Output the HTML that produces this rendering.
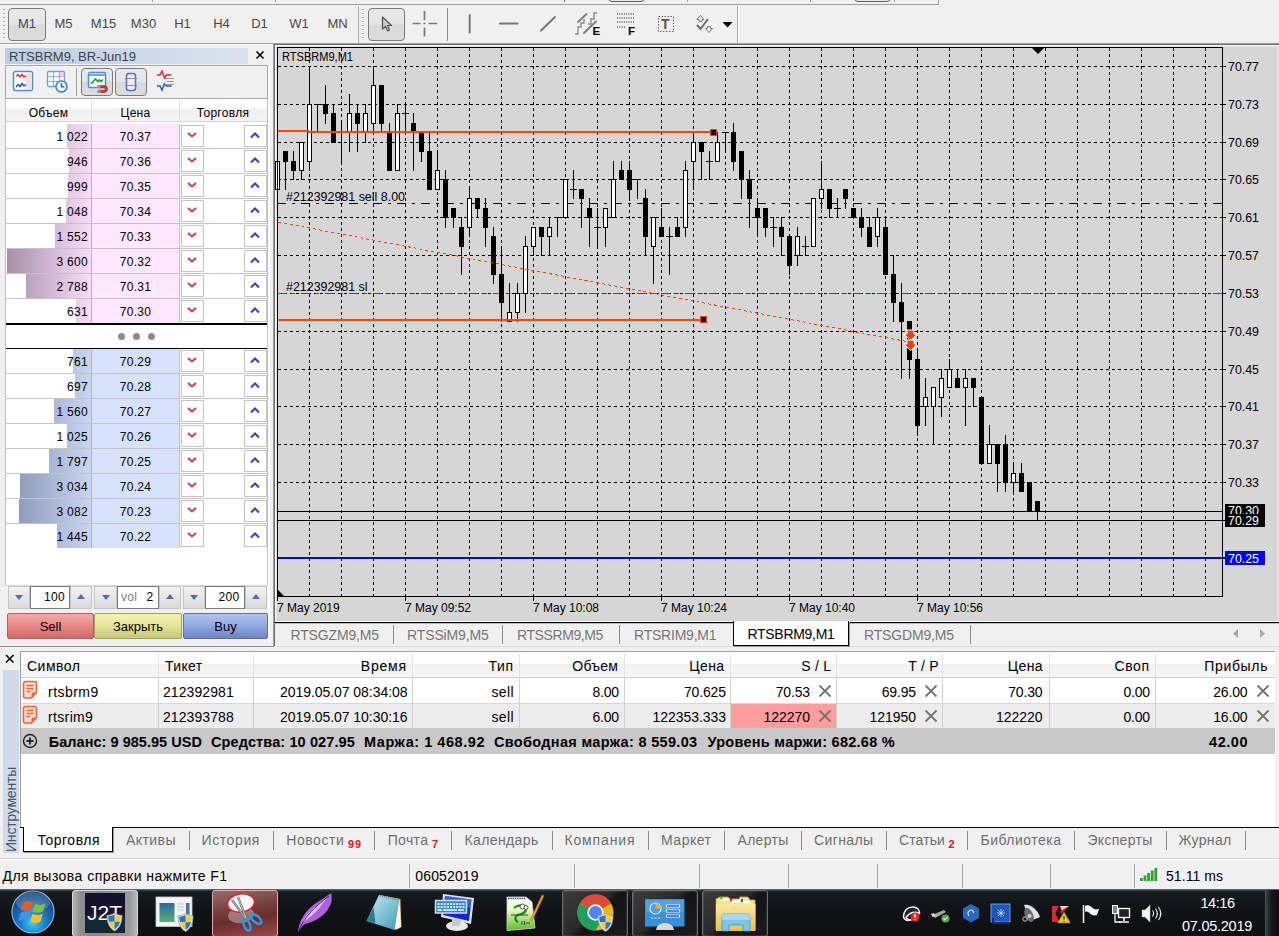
<!DOCTYPE html>
<html lang="ru"><head><meta charset="utf-8"><title>MetaTrader 5</title>
<style>
*{box-sizing:border-box;margin:0;padding:0}
html,body{width:1279px;height:936px;overflow:hidden;background:#f0f0f0}
body{position:relative;font-family:"Liberation Sans",sans-serif;font-size:13px;color:#000}
.abs{position:absolute}
.t{position:absolute;white-space:pre;line-height:1}
.ct{font-family:"Liberation Sans",sans-serif;font-size:12px}
svg text{font-family:"Liberation Sans",sans-serif}

.tf{font-size:13px;color:#484848}
.pbtn{border:1px solid #7a7a7a;border-radius:4px;background:linear-gradient(#e9e9e9 0,#e4e4e4 48%,#d9d9d9 52%,#dcdcdc 100%)}


.lf{font-size:12px;letter-spacing:.3px}
.sp{border:1px solid #c6c6c6;background:linear-gradient(#f3f3f3,#e6e6e6 50%,#dadada)}
.inp{border:1px solid #7c7c7c;background:#fff}
.tb{border:1px solid #888;border-radius:2px;font-size:13px;text-align:center;line-height:25px}


.sf{font-size:14px}
.gt{color:#6e6e6e}


.tbtn{border:1px solid #6c6c6c;border-radius:3px;background:linear-gradient(135deg,#3c3c3c 0,#2a2a2a 45%,#141414 55%,#1c1c1c 100%);box-shadow:inset 0 0 0 1px rgba(255,255,255,.08)}
</style></head>
<body>
<div class="abs " style="left:0px;top:4px;width:939px;height:1px;background:#a0a0a0"></div>
<div class="abs " style="left:0px;top:43px;width:1279px;height:1px;background:#a0a0a0"></div>
<div class="abs " style="left:0px;top:44px;width:273px;height:1px;background:#fff"></div>
<div class="abs " style="left:273px;top:43px;width:1006px;height:579px;background:#d6d6d6"></div>
<div class="abs " style="left:273px;top:43px;width:1006px;height:1px;background:#a0a0a0"></div>
<div class="abs " style="left:273px;top:43px;width:1px;height:604px;background:#a0a0a0"></div>
<div class="abs " style="left:274px;top:44px;width:1005px;height:1px;background:#6c6c6c"></div>
<div class="abs " style="left:274px;top:44px;width:1px;height:603px;background:#6c6c6c"></div>
<div class="abs " style="left:275px;top:45px;width:1004px;height:1px;background:#f8f8f8"></div>
<div class="abs " style="left:275px;top:45px;width:1px;height:577px;background:#f8f8f8"></div>
<div class="abs " style="left:276px;top:46px;width:1003px;height:1px;background:#e4e4e4"></div>
<div class="abs " style="left:276px;top:46px;width:1px;height:575px;background:#e4e4e4"></div>
<div class="abs " style="left:275px;top:621px;width:1004px;height:1px;background:#f8f8f8"></div>
<div class="abs " style="left:1277px;top:45px;width:2px;height:577px;background:#e2e2e2"></div>
<div class="abs " style="left:0px;top:646px;width:274px;height:1px;background:#909090"></div>
<svg class="abs" style="left:0;top:0" width="1279" height="640" viewBox="0 0 1279 640" shape-rendering="crispEdges">
<path d="M309.5 48V596M341.5 48V596M373.5 48V596M405.5 48V596M437.5 48V596M469.5 48V596M501.5 48V596M533.5 48V596M565.5 48V596M597.5 48V596M629.5 48V596M661.5 48V596M693.5 48V596M725.5 48V596M757.5 48V596M789.5 48V596M821.5 48V596M853.5 48V596M885.5 48V596M917.5 48V596M949.5 48V596M981.5 48V596M1013.5 48V596M1045.5 48V596M1077.5 48V596M1109.5 48V596M1141.5 48V596M1173.5 48V596M1205.5 48V596M278 66.5H1222M278 104.5H1222M278 142.5H1222M278 179.5H1222M278 217.5H1222M278 255.5H1222M278 293.5H1222M278 331.5H1222M278 369.5H1222M278 406.5H1222M278 444.5H1222M278 482.5H1222M278 520.5H1222M278 558.5H1222" stroke="#000" stroke-width="1" stroke-dasharray="3 3" fill="none"/>
<path d="M277 203.5H1222" stroke="#000" stroke-dasharray="9 6 3 6" fill="none"/>
<path d="M277 293.5H1222" stroke="#f00" stroke-dasharray="9 6 3 6" fill="none"/>
<path d="M277.5 161V190M285.5 151V190M293.5 151V180M301.5 142V180M309.5 66V171M317.5 104V133M314 104.5H321M325.5 85V124M333.5 104V143M341.5 123V162M338 132.5H345M349.5 94V152M357.5 104V152M365.5 104V143M373.5 66V133M381.5 85V133M389.5 123V171M397.5 104V171M405.5 104V133M402 113.5H409M413.5 113V171M421.5 132V162M429.5 132V190M437.5 151V190M445.5 170V228M453.5 208V228M461.5 217V275M469.5 189V237M477.5 198V218M485.5 198V247M493.5 227V284M501.5 246V322M509.5 283V322M517.5 283V322M525.5 236V313M533.5 227V256M541.5 227V256M549.5 217V256M557.5 217V237M554 217.5H561M565.5 179V218M573.5 170V199M570 189.5H577M581.5 189V228M589.5 198V247M597.5 208V247M594 227.5H601M605.5 208V247M613.5 161V218M621.5 161V180M629.5 161V199M637.5 179V199M634 179.5H641M645.5 189V256M653.5 217V284M661.5 208V237M669.5 227V275M666 236.5H673M677.5 217V237M685.5 161V237M693.5 132V190M701.5 142V180M709.5 151V180M706 161.5H713M717.5 132V162M725.5 132V152M722 132.5H729M733.5 123V171M741.5 151V199M749.5 170V228M757.5 198V237M765.5 208V237M773.5 217V247M770 227.5H777M781.5 217V256M789.5 236V275M797.5 227V266M805.5 236V256M802 246.5H809M813.5 198V247M821.5 161V209M829.5 189V218M837.5 198V218M834 208.5H841M845.5 189V209M853.5 208V218M861.5 208V237M869.5 217V247M877.5 208V247M885.5 217V275M893.5 255V322M901.5 283V379M909.5 321V379M917.5 350V436M925.5 378V426M933.5 387V445M941.5 369V417M949.5 359V388M957.5 369V388M965.5 369V426M973.5 378V407M981.5 397V464M989.5 425V464M997.5 444V492M1005.5 435V492M1013.5 463V492M1021.5 463V492M1029.5 482V511M1037.5 501V521" stroke="#000" stroke-width="1" fill="none"/>
<path d="M283 151H288V162H283ZM291 161H296V171H291ZM323 104H328V114H323ZM331 113H336V143H331ZM355 113H360V124H355ZM379 85H384V124H379ZM387 132H392V171H387ZM411 123H416V133H411ZM419 132H424V152H419ZM427 151H432V190H427ZM443 179H448V218H443ZM451 208H456V218H451ZM459 227H464V247H459ZM475 198H480V209H475ZM483 208H488V228H483ZM491 236H496V275H491ZM499 274H504V303H499ZM539 227H544V237H539ZM579 189H584V199H579ZM587 208H592V218H587ZM619 170H624V180H619ZM627 170H632V190H627ZM643 198H648V237H643ZM659 227H664V237H659ZM675 227H680V237H675ZM699 142H704V152H699ZM731 132H736V162H731ZM739 151H744V180H739ZM747 179H752V199H747ZM755 208H760V218H755ZM763 208H768V228H763ZM779 227H784V237H779ZM787 236H792V266H787ZM827 189H832V209H827ZM843 189H848V199H843ZM851 208H856V218H851ZM859 217H864V228H859ZM867 227H872V247H867ZM883 227H888V275H883ZM891 274H896V303H891ZM899 302H904V322H899ZM907 321H912V360H907ZM915 359H920V426H915ZM955 378H960V388H955ZM971 378H976V388H971ZM979 397H984V464H979ZM995 444H1000V464H995ZM1003 444H1008V483H1003ZM1019 473H1024V492H1019ZM1027 482H1032V511H1027ZM1035 501H1040V511H1035Z" fill="#000"/>
<rect x="275.5" y="161.5" width="4" height="28" fill="#fff" stroke="#000"/>
<rect x="299.5" y="142.5" width="4" height="28" fill="#fff" stroke="#000"/>
<rect x="307.5" y="104.5" width="4" height="57" fill="#fff" stroke="#000"/>
<rect x="347.5" y="113.5" width="4" height="19" fill="#fff" stroke="#000"/>
<rect x="363.5" y="113.5" width="4" height="19" fill="#fff" stroke="#000"/>
<rect x="371.5" y="85.5" width="4" height="38" fill="#fff" stroke="#000"/>
<rect x="395.5" y="113.5" width="4" height="57" fill="#fff" stroke="#000"/>
<rect x="435.5" y="170.5" width="4" height="19" fill="#fff" stroke="#000"/>
<rect x="467.5" y="198.5" width="4" height="29" fill="#fff" stroke="#000"/>
<rect x="507.5" y="312.5" width="4" height="9" fill="#fff" stroke="#000"/>
<rect x="515.5" y="293.5" width="4" height="19" fill="#fff" stroke="#000"/>
<rect x="523.5" y="246.5" width="4" height="47" fill="#fff" stroke="#000"/>
<rect x="531.5" y="227.5" width="4" height="19" fill="#fff" stroke="#000"/>
<rect x="547.5" y="227.5" width="4" height="9" fill="#fff" stroke="#000"/>
<rect x="563.5" y="179.5" width="4" height="38" fill="#fff" stroke="#000"/>
<rect x="603.5" y="208.5" width="4" height="19" fill="#fff" stroke="#000"/>
<rect x="611.5" y="179.5" width="4" height="38" fill="#fff" stroke="#000"/>
<rect x="651.5" y="217.5" width="4" height="29" fill="#fff" stroke="#000"/>
<rect x="683.5" y="170.5" width="4" height="57" fill="#fff" stroke="#000"/>
<rect x="691.5" y="142.5" width="4" height="19" fill="#fff" stroke="#000"/>
<rect x="715.5" y="142.5" width="4" height="19" fill="#fff" stroke="#000"/>
<rect x="795.5" y="236.5" width="4" height="19" fill="#fff" stroke="#000"/>
<rect x="811.5" y="198.5" width="4" height="48" fill="#fff" stroke="#000"/>
<rect x="819.5" y="189.5" width="4" height="9" fill="#fff" stroke="#000"/>
<rect x="875.5" y="217.5" width="4" height="19" fill="#fff" stroke="#000"/>
<rect x="923.5" y="397.5" width="4" height="9" fill="#fff" stroke="#000"/>
<rect x="931.5" y="387.5" width="4" height="19" fill="#fff" stroke="#000"/>
<rect x="939.5" y="378.5" width="4" height="19" fill="#fff" stroke="#000"/>
<rect x="947.5" y="369.5" width="4" height="18" fill="#fff" stroke="#000"/>
<rect x="963.5" y="378.5" width="4" height="9" fill="#fff" stroke="#000"/>
<rect x="987.5" y="444.5" width="4" height="19" fill="#fff" stroke="#000"/>
<rect x="1011.5" y="473.5" width="4" height="9" fill="#fff" stroke="#000"/>
<path d="M278 511.5H1222M278 520.5H1227" stroke="#000" fill="none"/>
<path d="M278 558H1227" stroke="#0000ff" stroke-width="2" fill="none"/>
<path d="M278 131H309M308 132H713" stroke="#ff4500" stroke-width="2" fill="none"/>
<path d="M278 320H704" stroke="#ff4500" stroke-width="2" fill="none"/>
<rect x="710.5" y="129.5" width="6" height="6" fill="#000" stroke="#ff4500"/>
<rect x="700.5" y="316.5" width="6" height="6" fill="#000" stroke="#ff4500"/>
<path d="M278 222L909 342" stroke="#ff4500" stroke-dasharray="3 3" fill="none"/>
<path d="M907 330h7v4h3l-6.5 6.500l-6.500 -6.500h3z" fill="#e8401c" stroke="#fff" stroke-width="1" shape-rendering="auto"/>
<path d="M907 340h7v4h3l-6.5 6.500l-6.500 -6.500h3z" fill="#e8401c" stroke="#fff" stroke-width="1" shape-rendering="auto"/>
<path d="M277.5 47V596.500H1222.500V47.500H277" stroke="#000" fill="none"/>
<path d="M1222 66.5H1226M1222 104.5H1226M1222 142.5H1226M1222 179.5H1226M1222 217.5H1226M1222 255.5H1226M1222 293.5H1226M1222 331.5H1226M1222 369.5H1226M1222 406.5H1226M1222 444.5H1226M1222 482.5H1226M1222 520.5H1226M1222 558.5H1226M277.5 596V601M405.5 596V601M533.5 596V601M661.5 596V601M789.5 596V601M917.5 596V601" stroke="#000" fill="none"/>
<path d="M1031 47h14l-7 7z" fill="#000" shape-rendering="auto"/>
<path d="M278 590v6h6z" fill="#000" shape-rendering="auto"/>
<text x="1228" y="70.5" class="ct" textLength="31" lengthAdjust="spacingAndGlyphs">70.77</text>
<text x="1228" y="108.5" class="ct" textLength="31" lengthAdjust="spacingAndGlyphs">70.73</text>
<text x="1228" y="146.5" class="ct" textLength="31" lengthAdjust="spacingAndGlyphs">70.69</text>
<text x="1228" y="183.5" class="ct" textLength="31" lengthAdjust="spacingAndGlyphs">70.65</text>
<text x="1228" y="221.5" class="ct" textLength="31" lengthAdjust="spacingAndGlyphs">70.61</text>
<text x="1228" y="259.5" class="ct" textLength="31" lengthAdjust="spacingAndGlyphs">70.57</text>
<text x="1228" y="297.5" class="ct" textLength="31" lengthAdjust="spacingAndGlyphs">70.53</text>
<text x="1228" y="335.5" class="ct" textLength="31" lengthAdjust="spacingAndGlyphs">70.49</text>
<text x="1228" y="373.5" class="ct" textLength="31" lengthAdjust="spacingAndGlyphs">70.45</text>
<text x="1228" y="410.5" class="ct" textLength="31" lengthAdjust="spacingAndGlyphs">70.41</text>
<text x="1228" y="448.5" class="ct" textLength="31" lengthAdjust="spacingAndGlyphs">70.37</text>
<text x="1228" y="486.5" class="ct" textLength="31" lengthAdjust="spacingAndGlyphs">70.33</text>
<rect x="1225" y="504" width="40" height="12" fill="#000"/><text x="1228" y="515" class="ct" fill="#fff" textLength="31" lengthAdjust="spacingAndGlyphs">70.30</text>
<rect x="1225" y="514" width="40" height="13" fill="#000"/><text x="1228" y="525" class="ct" fill="#fff" textLength="31" lengthAdjust="spacingAndGlyphs">70.29</text>
<rect x="1225" y="551" width="40" height="14" fill="#0000ff"/><text x="1228" y="562.5" class="ct" fill="#fff" textLength="31" lengthAdjust="spacingAndGlyphs">70.25</text>
<text x="277" y="612" class="ct">7 May 2019</text>
<text x="405" y="612" class="ct">7 May 09:52</text>
<text x="533" y="612" class="ct">7 May 10:08</text>
<text x="661" y="612" class="ct">7 May 10:24</text>
<text x="789" y="612" class="ct">7 May 10:40</text>
<text x="917" y="612" class="ct">7 May 10:56</text>
<text x="282" y="61" class="ct" textLength="71" lengthAdjust="spacingAndGlyphs">RTSBRM9,M1</text>
<text x="286" y="201" class="ct" textLength="119" lengthAdjust="spacingAndGlyphs">#212392981 sell 8.00</text>
<text x="286" y="291" class="ct" textLength="81.5" lengthAdjust="spacingAndGlyphs">#212392981 sl</text>
</svg>
<div class="abs " style="left:152px;top:0px;width:1px;height:2px;background:#a0a0a0"></div>
<div class="abs " style="left:275px;top:0px;width:1px;height:2px;background:#a0a0a0"></div>
<div class="abs " style="left:564px;top:0px;width:1px;height:2px;background:#707070"></div>
<div class="abs " style="left:687px;top:0px;width:1px;height:2px;background:#a0a0a0"></div>
<div class="abs " style="left:810px;top:0px;width:1px;height:2px;background:#a0a0a0"></div>
<div class="abs " style="left:894px;top:0px;width:1px;height:2px;background:#a0a0a0"></div>
<div class="abs " style="left:938px;top:0px;width:1px;height:5px;background:#a0a0a0"></div>
<div class="abs " style="left:608px;top:-6px;width:37px;height:8px;border:1px solid #606060;border-radius:4px;background:#e6e6e6"></div>
<div class="abs " style="left:854px;top:-6px;width:37px;height:8px;border:1px solid #606060;border-radius:4px;background:#e6e6e6"></div>
<div class="abs " style="left:3px;top:8px;width:2px;height:33px;background-image:repeating-linear-gradient(#f0f0f0 0 1px,#b0b0b0 1px 2px,#fff 2px 3px,#f0f0f0 3px 4px)"></div>
<div class="abs " style="left:358px;top:6px;width:1px;height:37px;background:#b0b0b0"></div>
<div class="abs " style="left:362px;top:8px;width:2px;height:33px;background-image:repeating-linear-gradient(#f0f0f0 0 1px,#b0b0b0 1px 2px,#fff 2px 3px,#f0f0f0 3px 4px)"></div>
<div class="abs " style="left:737px;top:6px;width:1px;height:37px;background:#a8a8a8"></div>
<div class="abs " style="left:738px;top:6px;width:1px;height:37px;background:#fff"></div>
<div class="abs pbtn" style="left:8px;top:8px;width:38px;height:33px;"></div>
<div class="t tf" style="left:-73px;width:200px;text-align:center;top:17px;">M1</div>
<div class="t tf" style="left:-36.5px;width:200px;text-align:center;top:17px;">M5</div>
<div class="t tf" style="left:3.5px;width:200px;text-align:center;top:17px;">M15</div>
<div class="t tf" style="left:43.5px;width:200px;text-align:center;top:17px;">M30</div>
<div class="t tf" style="left:82.5px;width:200px;text-align:center;top:17px;">H1</div>
<div class="t tf" style="left:121.5px;width:200px;text-align:center;top:17px;">H4</div>
<div class="t tf" style="left:159.5px;width:200px;text-align:center;top:17px;">D1</div>
<div class="t tf" style="left:199px;width:200px;text-align:center;top:17px;">W1</div>
<div class="t tf" style="left:237.5px;width:200px;text-align:center;top:17px;">MN</div>
<div class="abs pbtn" style="left:368px;top:8px;width:37px;height:33px;"></div>
<svg class="abs" style="left:360px;top:5px" width="390" height="38" viewBox="360 5 390 38"><path d="M382.500 17v12l3 -2.500l2 4.500l2 -1l-2 -4.500h4z" fill="#c8c8c8" stroke="#555" stroke-width="1.200" stroke-linejoin="round"/><path d="M412.500 23.500h8m8 0h8.500M424.500 11v9m0 7.500v9M423.500 23.500h2" stroke="#7a7a7a" stroke-width="1.700" fill="none"/><path d="M447.500 8v33" stroke="#8c8c8c" stroke-width="1"/><path d="M469.700 15v17.500M500 23.500h17.500M541 30.500l14 -13.500" stroke="#787878" stroke-width="2" stroke-linecap="round" fill="none"/><path d="M578 22l8.500 -8M584 33l12 -11.500" stroke="#808080" stroke-width="2" stroke-linecap="round" fill="none"/><path d="M575 34h3v-7h3v-4h3v-4M588 24h3v-5h3v-6h3" stroke="#8a8a8a" stroke-width="1.400" fill="none"/><text x="592.500" y="34.500" font-size="11.500" font-weight="bold" fill="#000">E</text><path d="M617 14h17" stroke="#808080" stroke-width="2" stroke-dasharray="1 1.300"/><path d="M617 18h17" stroke="#808080" stroke-width="2" stroke-dasharray="1 1.300"/><path d="M617 22h17" stroke="#808080" stroke-width="2" stroke-dasharray="1 1.300"/><path d="M617 27h9" stroke="#808080" stroke-width="2" stroke-dasharray="1 1.300"/><text x="628" y="34.500" font-size="11.500" font-weight="bold" fill="#000">F</text><rect x="658.500" y="16.500" width="15" height="15" fill="none" stroke="#666" stroke-dasharray="1.500 1.500"/><text x="661" y="29" font-size="14" font-family="Liberation Serif,serif" font-weight="bold" fill="#555">T</text><path d="M697 25l3.500 4l7.500 -10" stroke="#6a6a6a" stroke-width="2" fill="none"/><path d="M700.500 15.500l3.500 4h-2v2h-3v-2h-2zM709 32.500l-3.500 -4h2v-2h3v2h2z" fill="#f4f4f4" stroke="#7a7a7a" stroke-width="1"/><path d="M722.500 22h10l-5 5.500z" fill="#000"/></svg>
<div class="abs " style="left:5px;top:48px;width:243px;height:16px;background:linear-gradient(90deg,#bccde2,#d9e3ef)"></div>
<div class="t " style="left:9px;top:49px;font-size:13px;color:#3a4350;line-height:15px">RTSBRM9, BR-Jun19</div>
<svg class="abs" style="left:255px;top:50px" width="11" height="11"><path d="M1.500 1.500l7 7m0 -7l-7 7" stroke="#000" stroke-width="1.600"/></svg>
<div class="abs " style="left:5px;top:65px;width:263px;height:34px;border:1px solid #a8a8a8;background:#f0f0f0"></div>
<div class="abs " style="left:76px;top:68px;width:1px;height:28px;background:#a0a0a0"></div>
<div class="abs pbtn" style="left:81px;top:68px;width:32px;height:28px;"></div>
<div class="abs pbtn" style="left:115px;top:68px;width:32px;height:28px;"></div>
<svg class="abs" style="left:5px;top:65px" width="263" height="34" viewBox="5 65 263 34"><rect x="13.500" y="71.500" width="19" height="19" rx="2" fill="#fff" stroke="#4a90e0" stroke-width="1.500"/><rect x="26" y="72.500" width="6" height="17" fill="#f6dcf4"/><path d="M16 76l2 -1.500l2 2.500l2 -2.500l2 2.500l2 -1" stroke="#e03030" stroke-width="1.500" fill="none"/><path d="M16 87l2 -2.500l2 2l2 -3l2 2.500l2 -1.500" stroke="#2050d0" stroke-width="1.500" fill="none"/><rect x="47.500" y="71.500" width="17" height="15" rx="1.500" fill="#fff" stroke="#6aa0e0" stroke-width="1.300"/><path d="M48 76.500h16M48 81.500h16M53.500 72v14M59.500 72v14" stroke="#8ab4e8" stroke-width="1.200"/><rect x="60" y="72.500" width="4" height="4" fill="#f4c8f0"/><circle cx="61.500" cy="86.500" r="5.500" fill="#fff" stroke="#3a80e0" stroke-width="1.600"/><path d="M61.500 83v3.700h3" stroke="#2060d0" stroke-width="1.500" fill="none"/><rect x="88.500" y="72.500" width="17" height="15" rx="1.500" fill="#fff" stroke="#4a90e0" stroke-width="1.500"/><path d="M89 75h16" stroke="#6aa8f0" stroke-width="2"/><path d="M91 84l4.500 -5l2.500 2.500l1.500 -1.500l1.500 1.500l2 -2" stroke="#20a020" stroke-width="1.600" fill="none"/><path d="M98 85.500h6a3.500 3.500 0 0 1 0 7h-6v-2.200h6a1.300 1.300 0 0 0 0 -2.600h-6z" fill="#e03030" stroke="#a02020" stroke-width=".6"/><rect x="97.500" y="85.300" width="3" height="2.600" fill="#999"/><rect x="97.500" y="90.200" width="3" height="2.600" fill="#999"/><rect x="126.500" y="73.500" width="9" height="17" rx="2.500" fill="#fce8fa" stroke="#3a80e0" stroke-width="1.600"/><path d="M125 78.500h12M125 85.500h12" stroke="#8a8a8a" stroke-width="1"/><path d="M157 75h3l2 -4l2.500 7l2 -3h5" stroke="#e03030" stroke-width="1.600" fill="none"/><path d="M157 86h3l2 4l2.500 -6l2 2h5" stroke="#2060c0" stroke-width="1.600" fill="none"/><path d="M165 78.500h9M167 81.500h7M165 84.500h9" stroke="#999" stroke-width="1"/></svg>
<div class="abs " style="left:5px;top:99px;width:263px;height:486px;background:#fff;border-left:1px solid #c0c0c0;border-right:1px solid #c0c0c0"></div>
<div class="abs " style="left:6px;top:99px;width:261px;height:23px;background:linear-gradient(#fff 0,#fff 40%,#f1f1f1 45%,#f4f4f4 100%);border-bottom:1px solid #d4d4d4"></div>
<div class="abs " style="left:91px;top:100px;width:1px;height:22px;background:#e2e2e2"></div>
<div class="abs " style="left:179px;top:100px;width:1px;height:22px;background:#e2e2e2"></div>
<div class="t lf" style="left:-51.5px;width:200px;text-align:center;top:107px;">Объем</div>
<div class="t lf" style="left:35.5px;width:200px;text-align:center;top:107px;">Цена</div>
<div class="t lf" style="left:123px;width:200px;text-align:center;top:107px;">Торговля</div>
<div class="abs " style="left:92px;top:124px;width:87px;height:24px;background:#fee6fe"></div>
<div class="abs " style="left:67px;top:124px;width:24px;height:24px;background:linear-gradient(90deg,#a48ea6,#fadcfa);background-size:86px 24px;background-position:right top"></div>
<div class="abs " style="left:6px;top:148px;width:261px;height:1px;background:#c4c4c4"></div>
<div class="abs " style="left:91px;top:124px;width:1px;height:24px;background:#b4b4b4"></div>
<div class="abs " style="left:179px;top:124px;width:1px;height:24px;background:#c4c4c4"></div>
<div class="t lf" style="right:1191px;top:131px;">1 022</div>
<div class="t lf" style="left:35.5px;width:200px;text-align:center;top:131px;">70.37</div>
<div class="abs " style="left:181px;top:125px;width:23px;height:22px;border:1px solid #c4c4c4;background:#fff"></div>
<div class="abs " style="left:244px;top:125px;width:23px;height:22px;border:1px solid #c4c4c4;background:#fff"></div>
<svg class="abs" style="left:186px;top:131px" width="12" height="9"><path d="M2 2l4 3.500l4 -3.500" stroke="#d03c46" stroke-width="2" fill="none"/></svg>
<svg class="abs" style="left:249px;top:131px" width="12" height="9"><path d="M2 6.500l4 -4l4 4" stroke="#3c3cd0" stroke-width="2" fill="none"/></svg>
<div class="abs " style="left:92px;top:149px;width:87px;height:24px;background:#fee6fe"></div>
<div class="abs " style="left:69px;top:149px;width:22px;height:24px;background:linear-gradient(90deg,#a48ea6,#fadcfa);background-size:86px 24px;background-position:right top"></div>
<div class="abs " style="left:6px;top:173px;width:261px;height:1px;background:#c4c4c4"></div>
<div class="abs " style="left:91px;top:149px;width:1px;height:24px;background:#b4b4b4"></div>
<div class="abs " style="left:179px;top:149px;width:1px;height:24px;background:#c4c4c4"></div>
<div class="t lf" style="right:1191px;top:156px;">946</div>
<div class="t lf" style="left:35.5px;width:200px;text-align:center;top:156px;">70.36</div>
<div class="abs " style="left:181px;top:150px;width:23px;height:22px;border:1px solid #c4c4c4;background:#fff"></div>
<div class="abs " style="left:244px;top:150px;width:23px;height:22px;border:1px solid #c4c4c4;background:#fff"></div>
<svg class="abs" style="left:186px;top:156px" width="12" height="9"><path d="M2 2l4 3.500l4 -3.500" stroke="#d03c46" stroke-width="2" fill="none"/></svg>
<svg class="abs" style="left:249px;top:156px" width="12" height="9"><path d="M2 6.500l4 -4l4 4" stroke="#3c3cd0" stroke-width="2" fill="none"/></svg>
<div class="abs " style="left:92px;top:174px;width:87px;height:24px;background:#fee6fe"></div>
<div class="abs " style="left:68px;top:174px;width:23px;height:24px;background:linear-gradient(90deg,#a48ea6,#fadcfa);background-size:86px 24px;background-position:right top"></div>
<div class="abs " style="left:6px;top:198px;width:261px;height:1px;background:#c4c4c4"></div>
<div class="abs " style="left:91px;top:174px;width:1px;height:24px;background:#b4b4b4"></div>
<div class="abs " style="left:179px;top:174px;width:1px;height:24px;background:#c4c4c4"></div>
<div class="t lf" style="right:1191px;top:181px;">999</div>
<div class="t lf" style="left:35.5px;width:200px;text-align:center;top:181px;">70.35</div>
<div class="abs " style="left:181px;top:175px;width:23px;height:22px;border:1px solid #c4c4c4;background:#fff"></div>
<div class="abs " style="left:244px;top:175px;width:23px;height:22px;border:1px solid #c4c4c4;background:#fff"></div>
<svg class="abs" style="left:186px;top:181px" width="12" height="9"><path d="M2 2l4 3.500l4 -3.500" stroke="#d03c46" stroke-width="2" fill="none"/></svg>
<svg class="abs" style="left:249px;top:181px" width="12" height="9"><path d="M2 6.500l4 -4l4 4" stroke="#3c3cd0" stroke-width="2" fill="none"/></svg>
<div class="abs " style="left:92px;top:199px;width:87px;height:24px;background:#fee6fe"></div>
<div class="abs " style="left:66px;top:199px;width:25px;height:24px;background:linear-gradient(90deg,#a48ea6,#fadcfa);background-size:86px 24px;background-position:right top"></div>
<div class="abs " style="left:6px;top:223px;width:261px;height:1px;background:#c4c4c4"></div>
<div class="abs " style="left:91px;top:199px;width:1px;height:24px;background:#b4b4b4"></div>
<div class="abs " style="left:179px;top:199px;width:1px;height:24px;background:#c4c4c4"></div>
<div class="t lf" style="right:1191px;top:206px;">1 048</div>
<div class="t lf" style="left:35.5px;width:200px;text-align:center;top:206px;">70.34</div>
<div class="abs " style="left:181px;top:200px;width:23px;height:22px;border:1px solid #c4c4c4;background:#fff"></div>
<div class="abs " style="left:244px;top:200px;width:23px;height:22px;border:1px solid #c4c4c4;background:#fff"></div>
<svg class="abs" style="left:186px;top:206px" width="12" height="9"><path d="M2 2l4 3.500l4 -3.500" stroke="#d03c46" stroke-width="2" fill="none"/></svg>
<svg class="abs" style="left:249px;top:206px" width="12" height="9"><path d="M2 6.500l4 -4l4 4" stroke="#3c3cd0" stroke-width="2" fill="none"/></svg>
<div class="abs " style="left:92px;top:224px;width:87px;height:24px;background:#fee6fe"></div>
<div class="abs " style="left:55px;top:224px;width:36px;height:24px;background:linear-gradient(90deg,#a48ea6,#fadcfa);background-size:86px 24px;background-position:right top"></div>
<div class="abs " style="left:6px;top:248px;width:261px;height:1px;background:#c4c4c4"></div>
<div class="abs " style="left:91px;top:224px;width:1px;height:24px;background:#b4b4b4"></div>
<div class="abs " style="left:179px;top:224px;width:1px;height:24px;background:#c4c4c4"></div>
<div class="t lf" style="right:1191px;top:231px;">1 552</div>
<div class="t lf" style="left:35.5px;width:200px;text-align:center;top:231px;">70.33</div>
<div class="abs " style="left:181px;top:225px;width:23px;height:22px;border:1px solid #c4c4c4;background:#fff"></div>
<div class="abs " style="left:244px;top:225px;width:23px;height:22px;border:1px solid #c4c4c4;background:#fff"></div>
<svg class="abs" style="left:186px;top:231px" width="12" height="9"><path d="M2 2l4 3.500l4 -3.500" stroke="#d03c46" stroke-width="2" fill="none"/></svg>
<svg class="abs" style="left:249px;top:231px" width="12" height="9"><path d="M2 6.500l4 -4l4 4" stroke="#3c3cd0" stroke-width="2" fill="none"/></svg>
<div class="abs " style="left:92px;top:249px;width:87px;height:24px;background:#fee6fe"></div>
<div class="abs " style="left:7px;top:249px;width:84px;height:24px;background:linear-gradient(90deg,#a48ea6,#fadcfa);background-size:86px 24px;background-position:right top"></div>
<div class="abs " style="left:6px;top:273px;width:261px;height:1px;background:#c4c4c4"></div>
<div class="abs " style="left:91px;top:249px;width:1px;height:24px;background:#b4b4b4"></div>
<div class="abs " style="left:179px;top:249px;width:1px;height:24px;background:#c4c4c4"></div>
<div class="t lf" style="right:1191px;top:256px;">3 600</div>
<div class="t lf" style="left:35.5px;width:200px;text-align:center;top:256px;">70.32</div>
<div class="abs " style="left:181px;top:250px;width:23px;height:22px;border:1px solid #c4c4c4;background:#fff"></div>
<div class="abs " style="left:244px;top:250px;width:23px;height:22px;border:1px solid #c4c4c4;background:#fff"></div>
<svg class="abs" style="left:186px;top:256px" width="12" height="9"><path d="M2 2l4 3.500l4 -3.500" stroke="#d03c46" stroke-width="2" fill="none"/></svg>
<svg class="abs" style="left:249px;top:256px" width="12" height="9"><path d="M2 6.500l4 -4l4 4" stroke="#3c3cd0" stroke-width="2" fill="none"/></svg>
<div class="abs " style="left:92px;top:274px;width:87px;height:24px;background:#fee6fe"></div>
<div class="abs " style="left:26px;top:274px;width:65px;height:24px;background:linear-gradient(90deg,#a48ea6,#fadcfa);background-size:86px 24px;background-position:right top"></div>
<div class="abs " style="left:6px;top:298px;width:261px;height:1px;background:#c4c4c4"></div>
<div class="abs " style="left:91px;top:274px;width:1px;height:24px;background:#b4b4b4"></div>
<div class="abs " style="left:179px;top:274px;width:1px;height:24px;background:#c4c4c4"></div>
<div class="t lf" style="right:1191px;top:281px;">2 788</div>
<div class="t lf" style="left:35.5px;width:200px;text-align:center;top:281px;">70.31</div>
<div class="abs " style="left:181px;top:275px;width:23px;height:22px;border:1px solid #c4c4c4;background:#fff"></div>
<div class="abs " style="left:244px;top:275px;width:23px;height:22px;border:1px solid #c4c4c4;background:#fff"></div>
<svg class="abs" style="left:186px;top:281px" width="12" height="9"><path d="M2 2l4 3.500l4 -3.500" stroke="#d03c46" stroke-width="2" fill="none"/></svg>
<svg class="abs" style="left:249px;top:281px" width="12" height="9"><path d="M2 6.500l4 -4l4 4" stroke="#3c3cd0" stroke-width="2" fill="none"/></svg>
<div class="abs " style="left:92px;top:299px;width:87px;height:24px;background:#fee6fe"></div>
<div class="abs " style="left:76px;top:299px;width:15px;height:24px;background:linear-gradient(90deg,#a48ea6,#fadcfa);background-size:86px 24px;background-position:right top"></div>
<div class="abs " style="left:91px;top:299px;width:1px;height:24px;background:#b4b4b4"></div>
<div class="abs " style="left:179px;top:299px;width:1px;height:24px;background:#c4c4c4"></div>
<div class="t lf" style="right:1191px;top:306px;">631</div>
<div class="t lf" style="left:35.5px;width:200px;text-align:center;top:306px;">70.30</div>
<div class="abs " style="left:181px;top:300px;width:23px;height:22px;border:1px solid #c4c4c4;background:#fff"></div>
<div class="abs " style="left:244px;top:300px;width:23px;height:22px;border:1px solid #c4c4c4;background:#fff"></div>
<svg class="abs" style="left:186px;top:306px" width="12" height="9"><path d="M2 2l4 3.500l4 -3.500" stroke="#d03c46" stroke-width="2" fill="none"/></svg>
<svg class="abs" style="left:249px;top:306px" width="12" height="9"><path d="M2 6.500l4 -4l4 4" stroke="#3c3cd0" stroke-width="2" fill="none"/></svg>
<div class="abs " style="left:6px;top:323px;width:261px;height:2px;background:#000"></div>
<div class="abs " style="left:118px;top:333px;width:7px;height:7px;border-radius:50%;background:#8c8c8c"></div>
<div class="abs " style="left:133px;top:333px;width:7px;height:7px;border-radius:50%;background:#8c8c8c"></div>
<div class="abs " style="left:148px;top:333px;width:7px;height:7px;border-radius:50%;background:#8c8c8c"></div>
<div class="abs " style="left:6px;top:348px;width:261px;height:1px;background:#000"></div>
<div class="abs " style="left:92px;top:349px;width:87px;height:24px;background:#d6e2fb"></div>
<div class="abs " style="left:73px;top:349px;width:18px;height:24px;background:linear-gradient(90deg,#8492b0,#c8d6f4);background-size:86px 24px;background-position:right top"></div>
<div class="abs " style="left:6px;top:373px;width:261px;height:1px;background:#c4c4c4"></div>
<div class="abs " style="left:91px;top:349px;width:1px;height:24px;background:#b4b4b4"></div>
<div class="abs " style="left:179px;top:349px;width:1px;height:24px;background:#c4c4c4"></div>
<div class="t lf" style="right:1191px;top:356px;">761</div>
<div class="t lf" style="left:35.5px;width:200px;text-align:center;top:356px;">70.29</div>
<div class="abs " style="left:181px;top:350px;width:23px;height:22px;border:1px solid #c4c4c4;background:#fff"></div>
<div class="abs " style="left:244px;top:350px;width:23px;height:22px;border:1px solid #c4c4c4;background:#fff"></div>
<svg class="abs" style="left:186px;top:356px" width="12" height="9"><path d="M2 2l4 3.500l4 -3.500" stroke="#d03c46" stroke-width="2" fill="none"/></svg>
<svg class="abs" style="left:249px;top:356px" width="12" height="9"><path d="M2 6.500l4 -4l4 4" stroke="#3c3cd0" stroke-width="2" fill="none"/></svg>
<div class="abs " style="left:92px;top:374px;width:87px;height:24px;background:#d6e2fb"></div>
<div class="abs " style="left:75px;top:374px;width:16px;height:24px;background:linear-gradient(90deg,#8492b0,#c8d6f4);background-size:86px 24px;background-position:right top"></div>
<div class="abs " style="left:6px;top:398px;width:261px;height:1px;background:#c4c4c4"></div>
<div class="abs " style="left:91px;top:374px;width:1px;height:24px;background:#b4b4b4"></div>
<div class="abs " style="left:179px;top:374px;width:1px;height:24px;background:#c4c4c4"></div>
<div class="t lf" style="right:1191px;top:381px;">697</div>
<div class="t lf" style="left:35.5px;width:200px;text-align:center;top:381px;">70.28</div>
<div class="abs " style="left:181px;top:375px;width:23px;height:22px;border:1px solid #c4c4c4;background:#fff"></div>
<div class="abs " style="left:244px;top:375px;width:23px;height:22px;border:1px solid #c4c4c4;background:#fff"></div>
<svg class="abs" style="left:186px;top:381px" width="12" height="9"><path d="M2 2l4 3.500l4 -3.500" stroke="#d03c46" stroke-width="2" fill="none"/></svg>
<svg class="abs" style="left:249px;top:381px" width="12" height="9"><path d="M2 6.500l4 -4l4 4" stroke="#3c3cd0" stroke-width="2" fill="none"/></svg>
<div class="abs " style="left:92px;top:399px;width:87px;height:24px;background:#d6e2fb"></div>
<div class="abs " style="left:54px;top:399px;width:37px;height:24px;background:linear-gradient(90deg,#8492b0,#c8d6f4);background-size:86px 24px;background-position:right top"></div>
<div class="abs " style="left:6px;top:423px;width:261px;height:1px;background:#c4c4c4"></div>
<div class="abs " style="left:91px;top:399px;width:1px;height:24px;background:#b4b4b4"></div>
<div class="abs " style="left:179px;top:399px;width:1px;height:24px;background:#c4c4c4"></div>
<div class="t lf" style="right:1191px;top:406px;">1 560</div>
<div class="t lf" style="left:35.5px;width:200px;text-align:center;top:406px;">70.27</div>
<div class="abs " style="left:181px;top:400px;width:23px;height:22px;border:1px solid #c4c4c4;background:#fff"></div>
<div class="abs " style="left:244px;top:400px;width:23px;height:22px;border:1px solid #c4c4c4;background:#fff"></div>
<svg class="abs" style="left:186px;top:406px" width="12" height="9"><path d="M2 2l4 3.500l4 -3.500" stroke="#d03c46" stroke-width="2" fill="none"/></svg>
<svg class="abs" style="left:249px;top:406px" width="12" height="9"><path d="M2 6.500l4 -4l4 4" stroke="#3c3cd0" stroke-width="2" fill="none"/></svg>
<div class="abs " style="left:92px;top:424px;width:87px;height:24px;background:#d6e2fb"></div>
<div class="abs " style="left:67px;top:424px;width:24px;height:24px;background:linear-gradient(90deg,#8492b0,#c8d6f4);background-size:86px 24px;background-position:right top"></div>
<div class="abs " style="left:6px;top:448px;width:261px;height:1px;background:#c4c4c4"></div>
<div class="abs " style="left:91px;top:424px;width:1px;height:24px;background:#b4b4b4"></div>
<div class="abs " style="left:179px;top:424px;width:1px;height:24px;background:#c4c4c4"></div>
<div class="t lf" style="right:1191px;top:431px;">1 025</div>
<div class="t lf" style="left:35.5px;width:200px;text-align:center;top:431px;">70.26</div>
<div class="abs " style="left:181px;top:425px;width:23px;height:22px;border:1px solid #c4c4c4;background:#fff"></div>
<div class="abs " style="left:244px;top:425px;width:23px;height:22px;border:1px solid #c4c4c4;background:#fff"></div>
<svg class="abs" style="left:186px;top:431px" width="12" height="9"><path d="M2 2l4 3.500l4 -3.500" stroke="#d03c46" stroke-width="2" fill="none"/></svg>
<svg class="abs" style="left:249px;top:431px" width="12" height="9"><path d="M2 6.500l4 -4l4 4" stroke="#3c3cd0" stroke-width="2" fill="none"/></svg>
<div class="abs " style="left:92px;top:449px;width:87px;height:24px;background:#d6e2fb"></div>
<div class="abs " style="left:49px;top:449px;width:42px;height:24px;background:linear-gradient(90deg,#8492b0,#c8d6f4);background-size:86px 24px;background-position:right top"></div>
<div class="abs " style="left:6px;top:473px;width:261px;height:1px;background:#c4c4c4"></div>
<div class="abs " style="left:91px;top:449px;width:1px;height:24px;background:#b4b4b4"></div>
<div class="abs " style="left:179px;top:449px;width:1px;height:24px;background:#c4c4c4"></div>
<div class="t lf" style="right:1191px;top:456px;">1 797</div>
<div class="t lf" style="left:35.5px;width:200px;text-align:center;top:456px;">70.25</div>
<div class="abs " style="left:181px;top:450px;width:23px;height:22px;border:1px solid #c4c4c4;background:#fff"></div>
<div class="abs " style="left:244px;top:450px;width:23px;height:22px;border:1px solid #c4c4c4;background:#fff"></div>
<svg class="abs" style="left:186px;top:456px" width="12" height="9"><path d="M2 2l4 3.500l4 -3.500" stroke="#d03c46" stroke-width="2" fill="none"/></svg>
<svg class="abs" style="left:249px;top:456px" width="12" height="9"><path d="M2 6.500l4 -4l4 4" stroke="#3c3cd0" stroke-width="2" fill="none"/></svg>
<div class="abs " style="left:92px;top:474px;width:87px;height:24px;background:#d6e2fb"></div>
<div class="abs " style="left:20px;top:474px;width:71px;height:24px;background:linear-gradient(90deg,#8492b0,#c8d6f4);background-size:86px 24px;background-position:right top"></div>
<div class="abs " style="left:6px;top:498px;width:261px;height:1px;background:#c4c4c4"></div>
<div class="abs " style="left:91px;top:474px;width:1px;height:24px;background:#b4b4b4"></div>
<div class="abs " style="left:179px;top:474px;width:1px;height:24px;background:#c4c4c4"></div>
<div class="t lf" style="right:1191px;top:481px;">3 034</div>
<div class="t lf" style="left:35.5px;width:200px;text-align:center;top:481px;">70.24</div>
<div class="abs " style="left:181px;top:475px;width:23px;height:22px;border:1px solid #c4c4c4;background:#fff"></div>
<div class="abs " style="left:244px;top:475px;width:23px;height:22px;border:1px solid #c4c4c4;background:#fff"></div>
<svg class="abs" style="left:186px;top:481px" width="12" height="9"><path d="M2 2l4 3.500l4 -3.500" stroke="#d03c46" stroke-width="2" fill="none"/></svg>
<svg class="abs" style="left:249px;top:481px" width="12" height="9"><path d="M2 6.500l4 -4l4 4" stroke="#3c3cd0" stroke-width="2" fill="none"/></svg>
<div class="abs " style="left:92px;top:499px;width:87px;height:24px;background:#d6e2fb"></div>
<div class="abs " style="left:19px;top:499px;width:72px;height:24px;background:linear-gradient(90deg,#8492b0,#c8d6f4);background-size:86px 24px;background-position:right top"></div>
<div class="abs " style="left:6px;top:523px;width:261px;height:1px;background:#c4c4c4"></div>
<div class="abs " style="left:91px;top:499px;width:1px;height:24px;background:#b4b4b4"></div>
<div class="abs " style="left:179px;top:499px;width:1px;height:24px;background:#c4c4c4"></div>
<div class="t lf" style="right:1191px;top:506px;">3 082</div>
<div class="t lf" style="left:35.5px;width:200px;text-align:center;top:506px;">70.23</div>
<div class="abs " style="left:181px;top:500px;width:23px;height:22px;border:1px solid #c4c4c4;background:#fff"></div>
<div class="abs " style="left:244px;top:500px;width:23px;height:22px;border:1px solid #c4c4c4;background:#fff"></div>
<svg class="abs" style="left:186px;top:506px" width="12" height="9"><path d="M2 2l4 3.500l4 -3.500" stroke="#d03c46" stroke-width="2" fill="none"/></svg>
<svg class="abs" style="left:249px;top:506px" width="12" height="9"><path d="M2 6.500l4 -4l4 4" stroke="#3c3cd0" stroke-width="2" fill="none"/></svg>
<div class="abs " style="left:92px;top:524px;width:87px;height:24px;background:#d6e2fb"></div>
<div class="abs " style="left:57px;top:524px;width:34px;height:24px;background:linear-gradient(90deg,#8492b0,#c8d6f4);background-size:86px 24px;background-position:right top"></div>
<div class="abs " style="left:91px;top:524px;width:1px;height:24px;background:#b4b4b4"></div>
<div class="abs " style="left:179px;top:524px;width:1px;height:24px;background:#c4c4c4"></div>
<div class="t lf" style="right:1191px;top:531px;">1 445</div>
<div class="t lf" style="left:35.5px;width:200px;text-align:center;top:531px;">70.22</div>
<div class="abs " style="left:181px;top:525px;width:23px;height:22px;border:1px solid #c4c4c4;background:#fff"></div>
<div class="abs " style="left:244px;top:525px;width:23px;height:22px;border:1px solid #c4c4c4;background:#fff"></div>
<svg class="abs" style="left:186px;top:531px" width="12" height="9"><path d="M2 2l4 3.500l4 -3.500" stroke="#d03c46" stroke-width="2" fill="none"/></svg>
<svg class="abs" style="left:249px;top:531px" width="12" height="9"><path d="M2 6.500l4 -4l4 4" stroke="#3c3cd0" stroke-width="2" fill="none"/></svg>
<div class="abs sp" style="left:8px;top:586px;width:22px;height:23px;"></div>
<div class="abs inp" style="left:30px;top:586px;width:40px;height:23px;"></div>
<div class="abs sp" style="left:70px;top:586px;width:22px;height:23px;"></div>
<div class="abs sp" style="left:94px;top:586px;width:23px;height:23px;"></div>
<div class="abs inp" style="left:117px;top:586px;width:42px;height:23px;"></div>
<div class="abs sp" style="left:159px;top:586px;width:22px;height:23px;"></div>
<div class="abs sp" style="left:183px;top:586px;width:22px;height:23px;"></div>
<div class="abs inp" style="left:205px;top:586px;width:40px;height:23px;"></div>
<div class="abs sp" style="left:245px;top:586px;width:22px;height:23px;"></div>
<svg class="abs" style="left:14.5px;top:595px" width="9" height="6"><path d="M0 0h8l-4 5z" fill="#5a6ab0"/></svg>
<svg class="abs" style="left:101.5px;top:595px" width="9" height="6"><path d="M0 0h8l-4 5z" fill="#5a6ab0"/></svg>
<svg class="abs" style="left:189.7px;top:595px" width="9" height="6"><path d="M0 0h8l-4 5z" fill="#5a6ab0"/></svg>
<svg class="abs" style="left:77px;top:594px" width="9" height="6"><path d="M0 5h8l-4 -5z" fill="#5a6ab0"/></svg>
<svg class="abs" style="left:165.6px;top:594px" width="9" height="6"><path d="M0 5h8l-4 -5z" fill="#5a6ab0"/></svg>
<svg class="abs" style="left:251.6px;top:594px" width="9" height="6"><path d="M0 5h8l-4 -5z" fill="#5a6ab0"/></svg>
<div class="t lf" style="right:1214px;top:591px;">100</div>
<div class="t lf" style="right:1125.5px;top:591px;">2</div>
<div class="t lf" style="right:1039.5px;top:591px;">200</div>
<div class="t lf" style="left:121px;top:591px;color:#808080">vol</div>
<div class="abs tb" style="left:7px;top:613px;width:87px;height:26px;background:linear-gradient(#f6a8a8,#e88888 50%,#d46868);border-color:#b06060">Sell</div>
<div class="abs tb" style="left:94px;top:613px;width:88px;height:26px;background:linear-gradient(#f4f4b0,#e4e498 50%,#c8c878);border-color:#a0a060">Закрыть</div>
<div class="abs tb" style="left:183px;top:613px;width:85px;height:26px;background:linear-gradient(#b0c4f0,#90a8e0 50%,#6c84c4);border-color:#6070a0">Buy</div>
<div class="abs " style="left:5px;top:585px;width:263px;height:1px;background:#d8d8d8"></div>
<div class="abs " style="left:268px;top:65px;width:2px;height:577px;background:#fbfbfb"></div>
<div class="abs " style="left:274px;top:622px;width:1005px;height:1px;background:#000"></div>
<div class="abs " style="left:274px;top:623px;width:1005px;height:1px;background:#b8b8b8"></div>
<div class="abs " style="left:274px;top:646px;width:1005px;height:1px;background:#dadada"></div>
<div class="t " style="left:290.5px;top:628px;font-size:14px;letter-spacing:-0.148px;font-weight:400;color:#767676">RTSGZM9,M5</div>
<div class="t " style="left:407px;top:628px;font-size:14px;letter-spacing:-0.123px;font-weight:400;color:#767676">RTSSiM9,M5</div>
<div class="t " style="left:517px;top:628px;font-size:14px;letter-spacing:-0.398px;font-weight:400;color:#767676">RTSSRM9,M5</div>
<div class="t " style="left:634px;top:628px;font-size:14px;letter-spacing:-0.215px;font-weight:400;color:#767676">RTSRIM9,M1</div>
<div class="t " style="left:864px;top:628px;font-size:14px;letter-spacing:-0.155px;font-weight:400;color:#767676">RTSGDM9,M5</div>
<div class="abs " style="left:393px;top:625px;width:1px;height:19px;background:#8c8c8c"></div>
<div class="abs " style="left:502px;top:625px;width:1px;height:19px;background:#8c8c8c"></div>
<div class="abs " style="left:619px;top:625px;width:1px;height:19px;background:#8c8c8c"></div>
<div class="abs " style="left:970px;top:625px;width:1px;height:19px;background:#8c8c8c"></div>
<div class="abs " style="left:733px;top:621px;width:116px;height:25px;background:#fff;border:1px solid #000;border-top:none;box-shadow:1px 1px 0 #9a9a9a"></div>
<div class="t " style="left:747.5px;top:627px;font-size:14px;letter-spacing:-0.298px;font-weight:400;">RTSBRM9,M1</div>
<svg class="abs" style="left:1230px;top:629px" width="40" height="10"><path d="M8 0v9l-5 -4.500zM30 0v9l5 -4.500z" fill="#a8a8a8"/></svg>
<div class="abs " style="left:20px;top:651px;width:1255px;height:177px;background:#fff;border-top:1px solid #a0a0a0;border-left:1px solid #a0a0a0"></div>
<div class="abs " style="left:3px;top:670px;width:16px;height:183px;background:#cfdbea"></div>
<svg class="abs" style="left:4px;top:653px" width="12" height="12"><path d="M2 2l7.500 7.500m0 -7.500l-7.500 7.500" stroke="#000" stroke-width="1.500"/></svg>
<div class="t" style="left:3px;top:852px;width:88px;height:16px;transform-origin:0 0;transform:rotate(-90deg);font-size:14px;color:#4a5566;letter-spacing:-0.209px;line-height:16px">Инструменты</div>
<div class="abs " style="left:21px;top:652px;width:1254px;height:26px;background:linear-gradient(#fff 0,#fff 45%,#f2f2f2 50%,#f5f5f5 100%);border-bottom:1px solid #d0d0d0"></div>
<div class="abs " style="left:158px;top:653px;width:1px;height:23px;background:#e4e4e4"></div>
<div class="abs " style="left:253px;top:653px;width:1px;height:23px;background:#e4e4e4"></div>
<div class="abs " style="left:412px;top:653px;width:1px;height:23px;background:#e4e4e4"></div>
<div class="abs " style="left:519px;top:653px;width:1px;height:23px;background:#e4e4e4"></div>
<div class="abs " style="left:624px;top:653px;width:1px;height:23px;background:#e4e4e4"></div>
<div class="abs " style="left:730px;top:653px;width:1px;height:23px;background:#e4e4e4"></div>
<div class="abs " style="left:836px;top:653px;width:1px;height:23px;background:#e4e4e4"></div>
<div class="abs " style="left:942px;top:653px;width:1px;height:23px;background:#e4e4e4"></div>
<div class="abs " style="left:1049px;top:653px;width:1px;height:23px;background:#e4e4e4"></div>
<div class="abs " style="left:1155px;top:653px;width:1px;height:23px;background:#e4e4e4"></div>
<div class="t " style="left:27px;top:659px;font-size:14px;letter-spacing:0.503px;font-weight:400;">Символ</div>
<div class="t " style="left:165px;top:659px;font-size:14px;letter-spacing:0.344px;font-weight:400;">Тикет</div>
<div class="t " style="right:872.225px;top:659px;font-size:14px;letter-spacing:0.775px;font-weight:400;">Время</div>
<div class="t " style="right:765.448px;top:659px;font-size:14px;letter-spacing:0.552px;font-weight:400;">Тип</div>
<div class="t " style="right:660.722px;top:659px;font-size:14px;letter-spacing:0.278px;font-weight:400;">Объем</div>
<div class="t " style="right:554.668px;top:659px;font-size:14px;letter-spacing:0.332px;font-weight:400;">Цена</div>
<div class="t " style="right:447.759px;top:659px;font-size:14px;letter-spacing:0.241px;font-weight:400;">S / L</div>
<div class="t " style="right:340.26300000000003px;top:659px;font-size:14px;letter-spacing:0.237px;font-weight:400;">T / P</div>
<div class="t " style="right:236.1679999999999px;top:659px;font-size:14px;letter-spacing:0.332px;font-weight:400;">Цена</div>
<div class="t " style="right:129.44100000000003px;top:659px;font-size:14px;letter-spacing:0.559px;font-weight:400;">Своп</div>
<div class="t " style="right:10.817000000000007px;top:659px;font-size:14px;letter-spacing:0.683px;font-weight:400;">Прибыль</div>
<div class="abs " style="left:21px;top:703px;width:1254px;height:25px;background:#ececec"></div>
<div class="abs " style="left:21px;top:728px;width:1254px;height:26px;background:#c8c8c8"></div>
<div class="abs " style="left:21px;top:703px;width:1254px;height:1px;background:#d8d8d8"></div>
<div class="abs " style="left:731px;top:704px;width:105px;height:24px;background:#ff9c9c"></div>
<div class="abs " style="left:158px;top:678px;width:1px;height:50px;background:#d0d0d0"></div>
<div class="abs " style="left:253px;top:678px;width:1px;height:50px;background:#d0d0d0"></div>
<div class="abs " style="left:412px;top:678px;width:1px;height:50px;background:#d0d0d0"></div>
<div class="abs " style="left:519px;top:678px;width:1px;height:50px;background:#d0d0d0"></div>
<div class="abs " style="left:624px;top:678px;width:1px;height:50px;background:#d0d0d0"></div>
<div class="abs " style="left:730px;top:678px;width:1px;height:50px;background:#d0d0d0"></div>
<div class="abs " style="left:836px;top:678px;width:1px;height:50px;background:#d0d0d0"></div>
<div class="abs " style="left:942px;top:678px;width:1px;height:50px;background:#d0d0d0"></div>
<div class="abs " style="left:1049px;top:678px;width:1px;height:50px;background:#d0d0d0"></div>
<div class="abs " style="left:1155px;top:678px;width:1px;height:50px;background:#d0d0d0"></div>
<svg class="abs" style="left:22px;top:680px" width="18" height="21"><path d="M3.500 1.500h9a2 2 0 0 1 2 2v9l-5 5.500h-6a2 2 0 0 1 -2 -2v-12.500a2 2 0 0 1 2 -2z" fill="#fcdccf" stroke="#f0643c" stroke-width="1.600"/><path d="M14.500 12.500h-3.500a1.500 1.500 0 0 0 -1.500 1.500v4z" fill="#f0643c"/><path d="M4.500 5.500h7M4.500 8.500h7M4.500 11.500h4" stroke="#f0643c" stroke-width="1.300"/></svg>
<div class="t " style="left:48px;top:685px;font-size:14px;letter-spacing:0.471px;font-weight:400;">rtsbrm9</div>
<div class="t " style="left:163px;top:685px;font-size:14px;letter-spacing:0.075px;font-weight:400;">212392981</div>
<div class="t " style="right:871.5509999999999px;top:685px;font-size:14px;letter-spacing:-0.051px;font-weight:400;">2019.05.07 08:34:08</div>
<div class="t " style="right:765.129px;top:685px;font-size:14px;letter-spacing:0.371px;font-weight:400;">sell</div>
<div class="t " style="right:660.268px;top:685px;font-size:14px;letter-spacing:-0.268px;font-weight:400;">8.00</div>
<div class="t " style="right:553.155px;top:685px;font-size:14px;letter-spacing:-0.155px;font-weight:400;">70.625</div>
<div class="t " style="right:469.201px;top:685px;font-size:14px;letter-spacing:-0.201px;font-weight:400;">70.53</div>
<div class="t " style="right:363.201px;top:685px;font-size:14px;letter-spacing:-0.201px;font-weight:400;">69.95</div>
<div class="t " style="right:236.70100000000002px;top:685px;font-size:14px;letter-spacing:-0.201px;font-weight:400;">70.30</div>
<div class="t " style="right:129.26800000000003px;top:685px;font-size:14px;letter-spacing:-0.268px;font-weight:400;">0.00</div>
<div class="t " style="right:31.701000000000022px;top:685px;font-size:14px;letter-spacing:-0.201px;font-weight:400;">26.00</div>
<svg class="abs" style="left:818px;top:684px" width="14" height="14"><path d="M1.500 1.500l11 11m0 -11l-11 11" stroke="#747474" stroke-width="1.800"/></svg>
<svg class="abs" style="left:924px;top:684px" width="14" height="14"><path d="M1.500 1.500l11 11m0 -11l-11 11" stroke="#747474" stroke-width="1.800"/></svg>
<svg class="abs" style="left:1255.5px;top:684px" width="14" height="14"><path d="M1.500 1.500l11 11m0 -11l-11 11" stroke="#747474" stroke-width="1.800"/></svg>
<svg class="abs" style="left:22px;top:705px" width="18" height="21"><path d="M3.500 1.500h9a2 2 0 0 1 2 2v9l-5 5.500h-6a2 2 0 0 1 -2 -2v-12.500a2 2 0 0 1 2 -2z" fill="#fcdccf" stroke="#f0643c" stroke-width="1.600"/><path d="M14.500 12.500h-3.500a1.500 1.500 0 0 0 -1.500 1.500v4z" fill="#f0643c"/><path d="M4.500 5.500h7M4.500 8.500h7M4.500 11.500h4" stroke="#f0643c" stroke-width="1.300"/></svg>
<div class="t " style="left:48px;top:710px;font-size:14px;letter-spacing:0.353px;font-weight:400;">rtsrim9</div>
<div class="t " style="left:163px;top:710px;font-size:14px;letter-spacing:0.075px;font-weight:400;">212393788</div>
<div class="t " style="right:871.5509999999999px;top:710px;font-size:14px;letter-spacing:-0.051px;font-weight:400;">2019.05.07 10:30:16</div>
<div class="t " style="right:765.129px;top:710px;font-size:14px;letter-spacing:0.371px;font-weight:400;">sell</div>
<div class="t " style="right:660.268px;top:710px;font-size:14px;letter-spacing:-0.268px;font-weight:400;">6.00</div>
<div class="t " style="right:553.063px;top:710px;font-size:14px;letter-spacing:-0.063px;font-weight:400;">122353.333</div>
<div class="t " style="right:469.05999999999995px;top:710px;font-size:14px;letter-spacing:-0.06px;font-weight:400;">122270</div>
<div class="t " style="right:363.05999999999995px;top:710px;font-size:14px;letter-spacing:-0.06px;font-weight:400;">121950</div>
<div class="t " style="right:236.55999999999995px;top:710px;font-size:14px;letter-spacing:-0.06px;font-weight:400;">122220</div>
<div class="t " style="right:129.26800000000003px;top:710px;font-size:14px;letter-spacing:-0.268px;font-weight:400;">0.00</div>
<div class="t " style="right:31.701000000000022px;top:710px;font-size:14px;letter-spacing:-0.201px;font-weight:400;">16.00</div>
<svg class="abs" style="left:818px;top:709px" width="14" height="14"><path d="M1.500 1.500l11 11m0 -11l-11 11" stroke="#747474" stroke-width="1.800"/></svg>
<svg class="abs" style="left:924px;top:709px" width="14" height="14"><path d="M1.500 1.500l11 11m0 -11l-11 11" stroke="#747474" stroke-width="1.800"/></svg>
<svg class="abs" style="left:1255.5px;top:709px" width="14" height="14"><path d="M1.500 1.500l11 11m0 -11l-11 11" stroke="#747474" stroke-width="1.800"/></svg>
<svg class="abs" style="left:22px;top:733px" width="16" height="16"><circle cx="8" cy="8" r="6.500" fill="none" stroke="#222" stroke-width="1.400"/><path d="M4.500 8h7M8 4.500v7" stroke="#222" stroke-width="1.800"/></svg>
<div class="t " style="left:48.75px;top:735px;font-size:14.5px;letter-spacing:0.036px;font-weight:700;">Баланс: 9 985.95 USD</div>
<div class="t " style="left:211px;top:735px;font-size:14.5px;letter-spacing:0.119px;font-weight:700;">Средства: 10 027.95</div>
<div class="t " style="left:364px;top:735px;font-size:14.5px;letter-spacing:0.546px;font-weight:700;">Маржа: 1 468.92</div>
<div class="t " style="left:494px;top:735px;font-size:14.5px;letter-spacing:0.329px;font-weight:700;">Свободная маржа: 8 559.03</div>
<div class="t " style="left:707.5px;top:735px;font-size:14.5px;letter-spacing:0.271px;font-weight:700;">Уровень маржи: 682.68 %</div>
<div class="t " style="right:30.95900000000006px;top:735px;font-size:14.5px;letter-spacing:0.541px;font-weight:700;">42.00</div>
<div class="abs " style="left:20px;top:827px;width:1259px;height:1px;background:#000"></div>
<div class="abs " style="left:23px;top:827px;width:90px;height:25px;background:#fff;border:1px solid #000;border-top:none;box-shadow:1px 1px 0 #9a9a9a"></div>
<div class="t " style="left:37.5px;top:833px;font-size:14px;letter-spacing:0.502px;font-weight:400;">Торговля</div>
<div class="t " style="left:126px;top:833px;font-size:14px;letter-spacing:0.44px;font-weight:400;color:#6e6e6e">Активы</div>
<div class="t " style="left:201.5px;top:833px;font-size:14px;letter-spacing:0.6px;font-weight:400;color:#6e6e6e">История</div>
<div class="t " style="left:286.3px;top:833px;font-size:14px;letter-spacing:0.542px;font-weight:400;color:#6e6e6e">Новости</div>
<div class="t " style="left:387.7px;top:833px;font-size:14px;letter-spacing:0.362px;font-weight:400;color:#6e6e6e">Почта</div>
<div class="t " style="left:464.6px;top:833px;font-size:14px;letter-spacing:0.37px;font-weight:400;color:#6e6e6e">Календарь</div>
<div class="t " style="left:564.4px;top:833px;font-size:14px;letter-spacing:0.865px;font-weight:400;color:#6e6e6e">Компания</div>
<div class="t " style="left:661px;top:833px;font-size:14px;letter-spacing:0.513px;font-weight:400;color:#6e6e6e">Маркет</div>
<div class="t " style="left:737.5px;top:833px;font-size:14px;letter-spacing:0.292px;font-weight:400;color:#6e6e6e">Алерты</div>
<div class="t " style="left:814px;top:833px;font-size:14px;letter-spacing:0.386px;font-weight:400;color:#6e6e6e">Сигналы</div>
<div class="t " style="left:899px;top:833px;font-size:14px;letter-spacing:0.104px;font-weight:400;color:#6e6e6e">Статьи</div>
<div class="t " style="left:980.5px;top:833px;font-size:14px;letter-spacing:0.487px;font-weight:400;color:#6e6e6e">Библиотека</div>
<div class="t " style="left:1087.5px;top:833px;font-size:14px;letter-spacing:0.291px;font-weight:400;color:#6e6e6e">Эксперты</div>
<div class="t " style="left:1178.5px;top:833px;font-size:14px;letter-spacing:0.318px;font-weight:400;color:#6e6e6e">Журнал</div>
<div class="abs " style="left:189px;top:831px;width:1px;height:19px;background:#8c8c8c"></div>
<div class="abs " style="left:273px;top:831px;width:1px;height:19px;background:#8c8c8c"></div>
<div class="abs " style="left:374px;top:831px;width:1px;height:19px;background:#8c8c8c"></div>
<div class="abs " style="left:451px;top:831px;width:1px;height:19px;background:#8c8c8c"></div>
<div class="abs " style="left:552px;top:831px;width:1px;height:19px;background:#8c8c8c"></div>
<div class="abs " style="left:648px;top:831px;width:1px;height:19px;background:#8c8c8c"></div>
<div class="abs " style="left:724px;top:831px;width:1px;height:19px;background:#8c8c8c"></div>
<div class="abs " style="left:801px;top:831px;width:1px;height:19px;background:#8c8c8c"></div>
<div class="abs " style="left:886px;top:831px;width:1px;height:19px;background:#8c8c8c"></div>
<div class="abs " style="left:967px;top:831px;width:1px;height:19px;background:#8c8c8c"></div>
<div class="abs " style="left:1074px;top:831px;width:1px;height:19px;background:#8c8c8c"></div>
<div class="abs " style="left:1166px;top:831px;width:1px;height:19px;background:#8c8c8c"></div>
<div class="abs " style="left:1245px;top:831px;width:1px;height:19px;background:#8c8c8c"></div>
<div class="t " style="left:348px;top:839px;font-size:11px;letter-spacing:0.875px;font-weight:700;color:#e81010">99</div>
<div class="t " style="left:432px;top:839px;font-size:11px;letter-spacing:0.375px;font-weight:700;color:#e81010">7</div>
<div class="t " style="left:948.5px;top:839px;font-size:11px;letter-spacing:0.375px;font-weight:700;color:#e81010">2</div>
<div class="abs " style="left:0px;top:858px;width:1279px;height:1px;background:#d0d0d0"></div>
<div class="abs " style="left:0px;top:859px;width:1279px;height:1px;background:#fcfcfc"></div>
<div class="t " style="left:2.5px;top:869px;font-size:14px;letter-spacing:0.46px;font-weight:400;">Для вызова справки нажмите F1</div>
<div class="t " style="left:415.3px;top:869px;font-size:14px;letter-spacing:0.138px;font-weight:400;">06052019</div>
<div class="abs " style="left:409px;top:864px;width:1px;height:24px;background:#a8a8a8"></div>
<div class="abs " style="left:574px;top:864px;width:1px;height:24px;background:#a8a8a8"></div>
<div class="abs " style="left:699px;top:864px;width:1px;height:24px;background:#a8a8a8"></div>
<div class="abs " style="left:788px;top:864px;width:1px;height:24px;background:#a8a8a8"></div>
<div class="abs " style="left:877px;top:864px;width:1px;height:24px;background:#a8a8a8"></div>
<div class="abs " style="left:962px;top:864px;width:1px;height:24px;background:#a8a8a8"></div>
<div class="abs " style="left:1050px;top:864px;width:1px;height:24px;background:#a8a8a8"></div>
<div class="abs " style="left:1134px;top:864px;width:1px;height:24px;background:#a8a8a8"></div>
<svg class="abs" style="left:1139px;top:866px" width="20" height="16"><rect x="1.0" y="12.0" width="2.800" height="3.0" fill="#2aa52a"/><rect x="4.6" y="9.5" width="2.800" height="5.5" fill="#2aa52a"/><rect x="8.2" y="7.0" width="2.800" height="8.0" fill="#2aa52a"/><rect x="11.8" y="4.5" width="2.800" height="10.5" fill="#2aa52a"/><rect x="15.4" y="2.0" width="2.800" height="13.0" fill="#2aa52a"/></svg>
<div class="t " style="left:1166px;top:869px;font-size:14px;letter-spacing:0.057px;font-weight:400;">51.11 ms</div>
<div class="abs " style="left:0px;top:889px;width:1279px;height:47px;background:linear-gradient(#7c848c 0,#3a4248 1px,#181d21 3px,#101417 40%,#0d1013 100%)"></div>
<div class="abs " style="left:72px;top:890px;width:66px;height:47px;border:1px solid #d8d8d8;border-radius:3px;background:linear-gradient(90deg,#b4b4b4 0,#8e8e8e 12%,#8a8a8a 50%,#9a9a9a 88%,#b8b8b8 100%)"></div>
<div class="abs " style="left:212px;top:890px;width:66px;height:47px;border:1px solid #e6a8a8;border-radius:3px;background:linear-gradient(170deg,#9a6a6a 0,#7a4444 35%,#6a2c2c 60%,#a04848 100%)"></div>
<div class="abs tbtn" style="left:562px;top:890px;width:66px;height:47px;"></div>
<div class="abs tbtn" style="left:632px;top:890px;width:66px;height:47px;"></div>
<div class="abs tbtn" style="left:702px;top:890px;width:66px;height:47px;"></div>
<div class="abs " style="left:1265px;top:890px;width:14px;height:46px;border-left:1px solid #4a4f55;background:linear-gradient(90deg,#3a3f45,#15181c 40%,#0c0e11)"></div>
<svg class="abs" style="left:0;top:889px" width="1279" height="47" viewBox="0 889 1279 47"><defs><radialGradient id="orb" cx=".5" cy=".75" r=".7"><stop offset="0" stop-color="#36d0ff"/><stop offset=".45" stop-color="#1a78c8"/><stop offset="1" stop-color="#0c3c78"/></radialGradient><linearGradient id="gn" x1="0" y1="0" x2="0" y2="1"><stop offset="0" stop-color="#2a6aa8"/><stop offset="1" stop-color="#58b070"/></linearGradient><linearGradient id="np" x1="0" y1="0" x2="1" y2="1"><stop offset="0" stop-color="#c8ecf4"/><stop offset="1" stop-color="#3c9cb8"/></linearGradient><linearGradient id="fl" x1="0" y1="0" x2="0" y2="1"><stop offset="0" stop-color="#fbe9a0"/><stop offset="1" stop-color="#e8c050"/></linearGradient><linearGradient id="npp" x1="0" y1="0" x2="0" y2="1"><stop offset="0" stop-color="#fff"/><stop offset=".35" stop-color="#f0f8d0"/><stop offset="1" stop-color="#58c020"/></linearGradient></defs><circle cx="33" cy="912" r="21" fill="url(#orb)" stroke="#8ab8d8" stroke-width="1.200"/><ellipse cx="33" cy="902" rx="17" ry="10" fill="#fff" opacity=".18"/><path d="M23 903c3.500 -2.300 6.500 -2.300 10 -.3l-2.200 8c-3.300 -1.800 -6.300 -1.800 -9.800 .3z" fill="#f05a20"/><path d="M35 903.500c3.500 2 6.500 2 10.500 -.2l-2.300 8c-3.700 2 -6.700 2 -10.300 .2z" fill="#7cc040"/><path d="M20.500 913c3.500 -2.200 6.500 -2.200 10 -.2l-2.300 8c-3.300 -1.800 -6.300 -1.800 -9.700 .3z" fill="#3a98e8"/><path d="M32.500 913.700c3.500 2 6.500 2 10.300 -.2l-2.200 8c-3.800 2 -6.800 2 -10.300 .2z" fill="#fcc020"/><rect x="85" y="893" width="40" height="40" fill="#15122e"/><rect x="85" y="915" width="40" height="18" fill="#123034" opacity=".8"/><text x="87" y="920" font-size="20" fill="#f4f4f4" textLength="35" lengthAdjust="spacingAndGlyphs">J2T</text><g transform="translate(107 913) scale(1)"><path d="M7.500 0c2.500 1.800 5 2.300 7.500 2.300c0 7 -2 12.500 -7.500 15.700c-5.500 -3.200 -7.500 -8.700 -7.500 -15.700c2.500 0 5 -.5 7.500 -2.300z" fill="#e8e8e8" stroke="#9a9a9a" stroke-width=".8"/><path d="M7.500 1.300c2 1.400 4 1.900 6.200 2c0 2 -.2 3.800 -.7 5.500h-5.500z" fill="#f6d020"/><path d="M7.500 1.300c-2 1.400 -4 1.900 -6.200 2c0 2 .2 3.800 .7 5.500h5.500z" fill="#2f6fd0"/><path d="M2 8.800h5.500v7.700c-2.800 -1.700 -4.600 -4.300 -5.500 -7.700z" fill="#f6d020"/><path d="M13 8.800h-5.500v7.700c2.800 -1.700 4.600 -4.300 5.500 -7.700z" fill="#2f6fd0"/></g><rect x="156" y="897" width="36" height="29.500" fill="#f4f4f4" stroke="#c8c8c8" stroke-width=".8"/><rect x="159.500" y="903" width="15" height="19" fill="url(#gn)"/><path d="M177 904h7M177 907h7M177 910h7" stroke="#c8c8c8" stroke-width="1.200"/><rect x="186" y="903" width="3.500" height="12" fill="#3a78b8"/><g transform="translate(178 913.5) scale(1)"><path d="M7.500 0c2.500 1.800 5 2.300 7.500 2.300c0 7 -2 12.500 -7.500 15.700c-5.500 -3.200 -7.500 -8.700 -7.500 -15.700c2.500 0 5 -.5 7.500 -2.300z" fill="#e8e8e8" stroke="#9a9a9a" stroke-width=".8"/><path d="M7.500 1.300c2 1.400 4 1.900 6.200 2c0 2 -.2 3.800 -.7 5.500h-5.500z" fill="#f6d020"/><path d="M7.500 1.300c-2 1.400 -4 1.900 -6.200 2c0 2 .2 3.800 .7 5.500h5.500z" fill="#2f6fd0"/><path d="M2 8.800h5.500v7.700c-2.800 -1.700 -4.600 -4.300 -5.500 -7.700z" fill="#f6d020"/><path d="M13 8.800h-5.500v7.700c2.800 -1.700 4.600 -4.300 5.500 -7.700z" fill="#2f6fd0"/></g><ellipse cx="241" cy="915" rx="13" ry="8" fill="#e8c8c8" opacity=".45" transform="rotate(-8 241 915)"/><ellipse cx="241" cy="903" rx="13.500" ry="9" fill="#f8f8f8" stroke="#e02020" stroke-width="1.500" transform="rotate(-8 241 903)"/><path d="M232 900l14 19M238 897l8 21" stroke="#6a6a6a" stroke-width="2.200"/><path d="M232 900l14 19M238 897l8 21" stroke="#d8d8d8" stroke-width=".8"/><ellipse cx="247" cy="925" rx="3" ry="6" fill="none" stroke="#2a98e0" stroke-width="2.600" transform="rotate(-22 247 925)"/><ellipse cx="256" cy="919" rx="3.200" ry="6.500" fill="none" stroke="#2a98e0" stroke-width="2.600" transform="rotate(-50 256 919)"/><path d="M298 932c1 -12 8 -22 18 -29c6 -4 11 -7 15 -10c2 6 0 13 -5 19c-6 7 -14 10 -21 12c-3 2 -5 5 -7 8z" fill="#b060e0"/><path d="M302 922c5 -9 13 -16 25 -24c-6 8 -11 15 -22 23z" fill="#ecd4fa" opacity=".8"/><path d="M299 930c5 -12 14 -22 30 -34" stroke="#50208a" stroke-width="1" fill="none"/><path d="M379 895l21.500 4l1 28l-5 3z" fill="#d4a020"/><path d="M379 895l20.500 4l-5 31l-28 -9z" fill="url(#np)"/><path d="M399.500 899l1.500 28l-6.500 3z" fill="#f4f4f4"/><path d="M366.500 921l7 -14l2 16.500z" fill="#186878" opacity=".8"/><path d="M380 896l19 3.800" stroke="#888" stroke-width="2" stroke-dasharray="1 1"/><path d="M443 894l31 4l-3 26l-30 -7z" fill="#e4e4e4"/><path d="M445 896l26.500 3.500l-2.500 21.500l-26 -6z" fill="#1028d0"/><path d="M445 896l26.500 3.500l-1 8c-9 0 -18 -2 -26 -7z" fill="#5080f0" opacity=".6"/><ellipse cx="457" cy="926" rx="11" ry="5" fill="#e8e8e8"/><path d="M452 918l9 2l-1 6h-8z" fill="#c8c8c8"/><rect x="435.500" y="900.500" width="31" height="12.500" fill="#2a88e0" stroke="#d8d8d8" stroke-width="1.500"/><path d="M437.500 904h27M437.500 907h27" stroke="#fff" stroke-width="1.700" stroke-dasharray="2.200 .9"/><path d="M437.500 910h4.500m1 0h14m1 0h6" stroke="#fff" stroke-width="1.700"/><path d="M507 897h19l6 5l3 26l-28 2.500z" fill="url(#npp)" stroke="#d0d0d0" stroke-width=".8"/><path d="M508 898.500h17" stroke="#333" stroke-width="1.500" stroke-dasharray="1.300 1"/><path d="M514 908c5 -4 11 -3 12 1c0 4 -4 5 -8 6c-3 1 -4 5 0 7" stroke="#208a10" stroke-width="2.200" fill="none"/><circle cx="522.500" cy="906.500" r="2.500" fill="#fff" stroke="#333" stroke-width=".8"/><circle cx="526" cy="907.500" r="2" fill="#fff" stroke="#333" stroke-width=".8"/><path d="M511 915h17M522 921v4M524.500 921v4M526 923h4" stroke="#333" stroke-width=".9"/><path d="M542 895l1.800 1l-11.800 25l-1.800 -1z" fill="#f0a010" stroke="#b87808" stroke-width=".5"/><path d="M542 895l1.800 1l.6 -1.800z" fill="#d04040"/><circle cx="595.500" cy="912.500" r="18" fill="#e8b818"/><path d="M595.500 912.500L579.900 903.500A18 18 0 0 1 611.100 903.500z" fill="#dc4a38"/><path d="M595.500 912.500L579.900 903.500A18 18 0 0 0 595.500 930.500L603.300 917z" fill="#20a060"/><path d="M579.900 903.500A18 18 0 0 1 611.100 903.500H595.500z" fill="#dc4a38"/><circle cx="595.500" cy="912.500" r="8.200" fill="#f4f4f4"/><circle cx="595.500" cy="912.500" r="6.500" fill="#4a88f0"/><g transform="translate(598 913.5) scale(1)"><path d="M7.500 0c2.500 1.800 5 2.300 7.500 2.300c0 7 -2 12.500 -7.500 15.700c-5.500 -3.200 -7.500 -8.700 -7.500 -15.700c2.500 0 5 -.5 7.500 -2.300z" fill="#e8e8e8" stroke="#9a9a9a" stroke-width=".8"/><path d="M7.500 1.300c2 1.400 4 1.900 6.200 2c0 2 -.2 3.800 -.7 5.500h-5.500z" fill="#f6d020"/><path d="M7.500 1.300c-2 1.400 -4 1.900 -6.200 2c0 2 .2 3.800 .7 5.500h5.500z" fill="#2f6fd0"/><path d="M2 8.800h5.500v7.700c-2.800 -1.700 -4.600 -4.300 -5.500 -7.700z" fill="#f6d020"/><path d="M13 8.800h-5.500v7.700c2.800 -1.700 4.600 -4.300 5.500 -7.700z" fill="#2f6fd0"/></g><rect x="645" y="899" width="39.500" height="27.500" fill="#3a90d8"/><rect x="646" y="900" width="37.500" height="12" fill="#5ab0f0" opacity=".6"/><circle cx="655.500" cy="908.500" r="5.500" fill="none" stroke="#d8ecfc" stroke-width="1.200"/><path d="M655.500 908.500v-5.500a5.500 5.500 0 0 1 5.500 5.500z" fill="#f8a830"/><path d="M666 906h14M666 911h14M666 916h14" stroke="#e8f4ff" stroke-width="3"/><path d="M667 906h12M667 911h12M667 916h12" stroke="#2860c0" stroke-width="1.400"/><path d="M651 918h2M654.500 918h2" stroke="#60d8f0" stroke-width="2"/><path d="M658 918h2" stroke="#f8a830" stroke-width="2"/><path d="M656 930a9 7 0 0 1 18 0z" fill="#d8d8d8"/><path d="M720 897h8l2 2h9l1 -2h8l2 3h5v30h-39v-31z" fill="url(#fl)" stroke="#c8a030" stroke-width=".8"/><rect x="720.500" y="896" width="2" height="3" fill="#20a040"/><rect x="730" y="898" width="2" height="3" fill="#e02020"/><rect x="741" y="899" width="2" height="3" fill="#2060e0"/><rect x="722" y="898.500" width="7" height="2.500" fill="#fff"/><rect x="732" y="900" width="8" height="2.500" fill="#fff"/><rect x="743" y="901" width="7" height="2.500" fill="#fff"/><path d="M716 904h39.500v27h-39.500z" fill="url(#fl)"/><path d="M722 917a3 3 0 0 1 3 -3h22a3 3 0 0 1 3 3v14h-7v-6h-14v6h-7z" fill="#7cc4ec" stroke="#4a98cc" stroke-width=".8"/><path d="M722 917a3 3 0 0 1 3 -3h22a3 3 0 0 1 3 3v3h-28z" fill="#b8e0f8" opacity=".7"/><path d="M903.500 917c0 -6 4 -10.500 10 -10c4 .5 6.500 3 6 6.500c-4 -2.500 -10 -1.500 -13.500 4c1 1.500 3 2.500 5.500 2.500c-4 1 -7 0 -8 -3z" fill="#222" stroke="#f4f4f4" stroke-width="1.400"/><circle cx="915" cy="917" r="4.500" fill="#e82828"/><path d="M915 914v3.500M915 919v1" stroke="#fff" stroke-width="1.400"/><path d="M932 915l12 -5l2 2l-11 6z" fill="#a8a8a8"/><path d="M931 914l3 -1l1.500 3l-3 1z" fill="#d8d8d8"/><circle cx="945.500" cy="918.500" r="3.800" fill="#48b038" stroke="#888" stroke-width=".6"/><path d="M943.500 918.500l1.500 1.500l2.500 -3" stroke="#fff" stroke-width="1.100" fill="none"/><path d="M971 904l8 4.500v9.500l-8 4.500l-8 -4.500v-9.500z" fill="#2c68c0"/><path d="M969 916c-2 -2 -1 -6 2 -6c2 0 3 2 2 3" stroke="#d8e8ff" stroke-width="1.200" fill="none"/><rect x="991" y="904" width="19" height="18" fill="#1c58b8" stroke="#8ab0e8" stroke-width=".8"/><path d="M993 918v5h17" stroke="#0a2a80" stroke-width="2" fill="none"/><path d="M1001 909v8M997 913h8M998 910l6 6M1004 910l-6 6" stroke="#c8dcff" stroke-width=".8"/><path d="M1024 905c6 -2 14 5 16 12c-4 2 -7 3 -10 3z" fill="#e0e0e0"/><ellipse cx="1029" cy="915" rx="4" ry="7.500" fill="#6a6a6a" transform="rotate(-25 1029 915)"/><circle cx="1029.500" cy="916" r="2" fill="#d0d0d0"/><circle cx="1025" cy="919" r="2.200" fill="none" stroke="#c8c8c8" stroke-width="1"/><path d="M1052 906h7l-3.500 7l3.500 9h-7z" fill="#e02828"/><path d="M1060 906h9l-8 8z" fill="#e02828"/><path d="M1060 906l9 0l-7 4z" fill="#f8f8f8" opacity=".8"/><path d="M1064 912l6.500 11h-13z" fill="#f0c820" stroke="#8a7010" stroke-width=".6"/><path d="M1064 916v3.500M1064 921v.8" stroke="#222" stroke-width="1.200"/><path d="M1083.500 905v18" stroke="#f4f4f4" stroke-width="1.500"/><path d="M1085 906c3 -1.500 5 -.5 7 1.500c2 2 4 2.500 7 1.500l-2 6c-3 1 -5 .5 -7 -1.500c-2 -2 -4 -2.500 -5 -1.500z" fill="#f8f8f8"/><rect x="1112.500" y="905.500" width="5" height="8" fill="#888" stroke="#f4f4f4" stroke-width="1"/><path d="M1115 913v9h6" stroke="#f4f4f4" stroke-width="1.300" fill="none"/><rect x="1118.500" y="908.500" width="11" height="9" fill="#222" stroke="#f4f4f4" stroke-width="1.400"/><path d="M1124 918v3M1119 922h10" stroke="#f4f4f4" stroke-width="1.600"/><path d="M1142 910h3l5 -5v17l-5 -5h-3z" fill="#f4f4f4" stroke="#bbb" stroke-width=".5"/><path d="M1152.500 910.500c1.500 2 1.500 4 0 6M1155.500 908.500c2.500 3.500 2.500 6.500 0 10M1158.500 907c3.200 4.500 3.200 8.500 0 13" stroke="#e8e8e8" stroke-width="1.100" fill="none"/></svg>
<div class="t " style="left:1117.5px;width:200px;text-align:center;top:896px;font-size:14.500px;color:#fff;letter-spacing:-0.459px">14:16</div>
<div class="t " style="left:1117px;width:200px;text-align:center;top:919px;font-size:14.500px;color:#fff;letter-spacing:-0.258px">07.05.2019</div>
</body></html>
